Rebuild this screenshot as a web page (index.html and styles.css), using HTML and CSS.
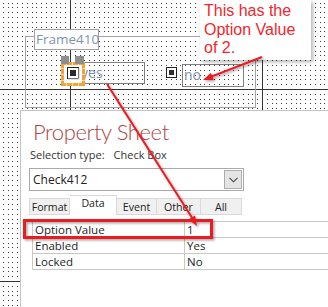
FILE: index.html
```html
<!DOCTYPE html>
<html>
<head>
<meta charset="utf-8">
<link rel="stylesheet" href="styles.css">
</head>
<body>
<svg class="surface" width="328" height="307" viewBox="0 0 328 307">
  <defs>
    <pattern id="dots" x="70" y="89" width="24" height="24" patternUnits="userSpaceOnUse">
      <path fill="#3a3a3a" d="M0 0h1v1h-1zM5 0h1v1h-1zM10 0h1v1h-1zM14 0h1v1h-1zM19 0h1v1h-1zM0 5h1v1h-1zM5 5h1v1h-1zM10 5h1v1h-1zM14 5h1v1h-1zM19 5h1v1h-1zM0 10h1v1h-1zM5 10h1v1h-1zM10 10h1v1h-1zM14 10h1v1h-1zM19 10h1v1h-1zM0 14h1v1h-1zM5 14h1v1h-1zM10 14h1v1h-1zM14 14h1v1h-1zM19 14h1v1h-1zM0 19h1v1h-1zM5 19h1v1h-1zM10 19h1v1h-1zM14 19h1v1h-1zM19 19h1v1h-1z"/>
    </pattern>
  </defs>
  <rect width="328" height="307" fill="url(#dots)"/>
  <path d="M70.5 0V307M262.5 0V307M0 89.5H328M0 281.5H328" stroke="#333" stroke-width="1" shape-rendering="crispEdges"/>
</svg>

<div class="frame"></div>
<div class="frame-label">Frame410</div>

<div class="textbox tb-yes">yes</div>
<div class="textbox tb-no">no</div>

<div class="check"><div class="mark"></div></div>

<svg class="selected" width="35" height="40" viewBox="0 0 35 40">
  <rect x="7.5" y="13.5" width="21" height="21" fill="#fff" stroke="#f6a13a" stroke-width="3"/>
  <path d="M11 12v3M17 12v3M23 12v3M11 33v3M17 33v3M23 33v3M6 18h3M6 24h3M6 30h3M27 18h3M27 24h3M27 30h3" stroke="#fbd9a8" stroke-width="1" shape-rendering="crispEdges"/>
  <rect x="6" y="6" width="8" height="8" fill="#8e8e8e"/>
  <rect x="20" y="6" width="9" height="8" fill="#8e8e8e"/>
  <rect x="12.5" y="17.5" width="11" height="11" fill="#fff" stroke="#222"/>
  <rect x="15" y="20" width="6" height="6" fill="#2a2a2a"/>
  <path d="M24 18v11h-11" stroke="#c8c8c8" fill="none"/>
</svg>

<div class="callout">This has the<br>Option Value<br>of 2.</div>

<div class="sheet">
  <div class="sheet-title">Property Sheet</div>
  <div class="sel">Selection type:<span class="sel-val">Check Box</span></div>
  <div class="combo">
    <span class="combo-text">Check412</span>
    <div class="drop">
      <svg width="9" height="6" viewBox="0 0 9 6"><path d="M0.5 0.8L4.5 4.8L8.5 0.8" fill="none" stroke="#444" stroke-width="1.1"/></svg>
    </div>
  </div>
  <div class="tabs">
    <div class="tab t-format">Format</div>
    <div class="tab t-data active">Data</div>
    <div class="tab t-event">Event</div>
    <div class="tab t-other">Other</div>
    <div class="tab t-all">All</div>
  </div>
  <table class="grid">
    <tr><td class="k">Option Value</td><td class="v">1</td></tr>
    <tr><td class="k">Enabled</td><td class="v">Yes</td></tr>
    <tr><td class="k">Locked</td><td class="v">No</td></tr>
  </table>
</div>

<svg class="notes" width="328" height="307" viewBox="0 0 328 307">
  <defs>
    <filter id="sh" x="-20%" y="-20%" width="140%" height="140%">
      <feDropShadow dx="1.5" dy="1.5" stdDeviation="1.2" flood-color="#000" flood-opacity="0.35"/>
    </filter>
  </defs>
  <g filter="url(#sh)">
    <rect x="24.5" y="220.5" width="187" height="17" fill="none" stroke="#ea1c24" stroke-width="3"/>
    <line x1="107" y1="84" x2="192.5" y2="218.5" stroke="#ea1c24" stroke-width="2"/>
    <polygon points="197,226 188.2,219.6 195,215.4" fill="#ea1c24"/>
    <line x1="262" y1="57" x2="211" y2="76.8" stroke="#ea1c24" stroke-width="2"/>
    <polygon points="203,80 210.9,72.7 213.8,80.1" fill="#ea1c24"/>
  </g>
</svg>
</body>
</html>
```

FILE: styles.css
```css
html, body {
  margin: 0;
  padding: 0;
}
body {
  width: 328px;
  height: 307px;
  position: relative;
  overflow: hidden;
  background: #fff;
  font-family: "Open Sans", "Noto Sans", sans-serif;
}
.surface {
  position: absolute;
  left: 0;
  top: 0;
}
.frame {
  position: absolute;
  left: 25px;
  top: 36px;
  width: 231px;
  height: 72px;
  box-sizing: border-box;
  border: 1px solid #a3a3a3;
}
.frame-label {
  position: absolute;
  left: 34px;
  top: 29px;
  width: 65px;
  height: 21px;
  box-sizing: border-box;
  border: 1px solid #a0a0a0;
  background: #fff;
  font-size: 13.5px;
  line-height: 19px;
  padding-left: 1px;
  color: #7e93ad;
  white-space: nowrap;
}
.textbox {
  position: absolute;
  box-sizing: border-box;
  border: 1px solid #7f7f7f;
  font-size: 14px;
  line-height: 19px;
  color: #7e93ad;
  padding-left: 1px;
}
.tb-yes {
  left: 79px;
  top: 62px;
  width: 66px;
  height: 22px;
}
.tb-no {
  left: 182px;
  top: 64px;
  width: 62px;
  height: 23px;
}
.check {
  position: absolute;
  left: 166px;
  top: 67px;
  width: 11px;
  height: 11px;
  box-sizing: border-box;
  border: 1px solid #222;
  padding: 2px;
  background: #fff;
}
.mark {
  width: 5px;
  height: 5px;
  background: #2e2e2e;
}
.selected {
  position: absolute;
  left: 55px;
  top: 50px;
}
.callout {
  position: absolute;
  left: 200px;
  top: 0;
  width: 111px;
  height: 60px;
  box-sizing: border-box;
  padding: 2px 0 0 4px;
  background: #fff;
  box-shadow: 2px 2px 4px rgba(0, 0, 0, 0.3);
  font-family: "Liberation Sans", Arial, sans-serif;
  font-size: 16px;
  line-height: 18.5px;
  color: #f2262c;
}
.sheet {
  position: absolute;
  left: 20px;
  top: 110px;
  right: 0;
  bottom: 0;
  background: #fff;
  border-left: 1px solid #c4c4c4;
  border-top: 1px solid #c4c4c4;
  display: flex;
  flex-direction: column;
  align-items: flex-start;
}
.sheet-title {
  margin: 7px 0 0 12px;
  height: 28px;
  font-family: "Lato", "Open Sans", sans-serif;
  font-size: 22px;
  font-weight: 300;
  letter-spacing: -0.4px;
  line-height: 28px;
  color: #ad4545;
  white-space: nowrap;
}
.sel {
  margin: 1px 0 0 9px;
  font-size: 11px;
  line-height: 15px;
  color: #333;
  white-space: nowrap;
}
.sel-val {
  margin-left: 9px;
}
.combo {
  margin: 6px 0 0 8px;
  width: 215px;
  height: 23px;
  box-sizing: border-box;
  border: 1px solid #a9a9a9;
  display: flex;
  align-items: center;
  justify-content: space-between;
  padding: 0 1px 0 3px;
}
.combo-text {
  font-size: 12px;
  color: #222;
}
.drop {
  width: 18px;
  height: 19px;
  box-sizing: border-box;
  border: 1px solid #adadad;
  background: #e4e4e4;
  display: flex;
  align-items: center;
  justify-content: center;
}
.tabs {
  margin: 4px 0 0 8px;
  height: 20px;
  display: flex;
  align-items: flex-end;
}
.tab {
  height: 17px;
  box-sizing: border-box;
  border: 1px solid #d9d9d9;
  border-left: none;
  background: #f0f0f0;
  font-size: 10.6px;
  line-height: 16px;
  color: #222;
  text-align: center;
  white-space: nowrap;
}
.t-format { width: 41px; border-left: 1px solid #d9d9d9; }
.t-data { width: 47px; }
.t-event { width: 40px; }
.t-other { width: 44px; }
.t-all { width: 41px; }
.tab.active {
  height: 20px;
  background: #fff;
  border-bottom: none;
  line-height: 15px;
}
.grid {
  margin: 6px 0 0 11px;
  border-collapse: collapse;
  width: 310px;
  table-layout: fixed;
  font-size: 11.5px;
  color: #1e1e1e;
}
.grid td {
  height: 15px;
  padding: 0 0 0 2px;
  border: 1px solid #c8c8c8;
  line-height: 14px;
  white-space: nowrap;
}
.grid .k {
  width: 149px;
}
.notes {
  position: absolute;
  left: 0;
  top: 0;
  pointer-events: none;
}
```
